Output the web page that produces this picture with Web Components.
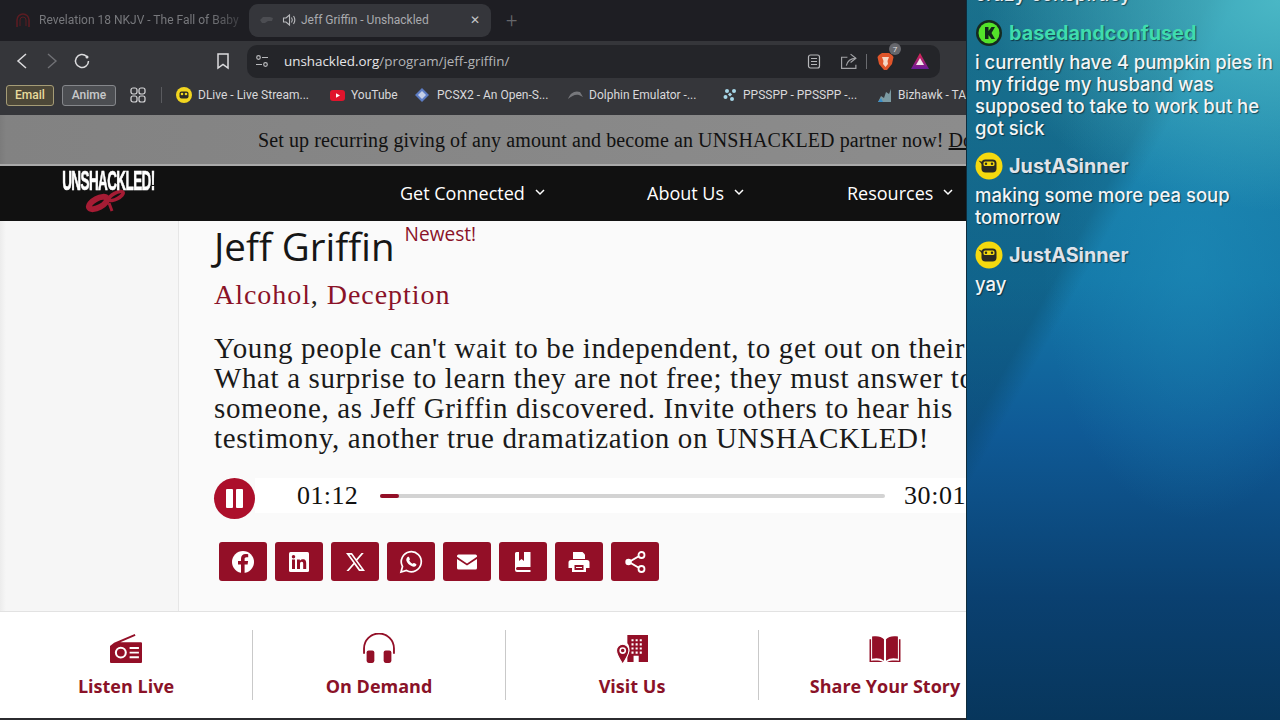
<!DOCTYPE html>
<html>
<head>
<meta charset="utf-8">
<title>Jeff Griffin - Unshackled</title>
<style>
  html, body { margin: 0; height: 720px; overflow: hidden; background: #1e1e22; }
  body { display: flex; font-family: "Open Sans", sans-serif; }
</style>
</head>
<body>
<browser-window>
  <browser-tabs></browser-tabs>
  <browser-toolbar></browser-toolbar>
  <bookmarks-bar></bookmarks-bar>
  <promo-banner>Set up recurring giving of any amount and become an UNSHACKLED partner now! <u>Do</u></promo-banner>
  <site-nav></site-nav>
  <program-page></program-page>
  <bottom-bar></bottom-bar>
</browser-window>
<stream-chat>
  <chat-message name="basedandconfused" color="#3fdcae" badge="k">i currently have 4 pumpkin pies in my fridge my husband was supposed to take to work but he got sick</chat-message>
  <chat-message name="JustASinner" color="#dfe3ea" badge="d">making some more pea soup tomorrow</chat-message>
  <chat-message name="JustASinner" color="#dfe3ea" badge="d">yay</chat-message>
</stream-chat>

<script>
// fill colour used all over the site
const RED = "#930f27";

class BrowserWindow extends HTMLElement {
  connectedCallback() {
    const shadowRoot = this.attachShadow({ mode: "open" });
    shadowRoot.innerHTML = `
    <style>
      :host { display: flex; flex-direction: column; width: 966px; height: 720px; overflow: hidden; flex: none; }
    </style>
    <slot></slot>`;
  }
}
customElements.define("browser-window", BrowserWindow);

class BrowserTabs extends HTMLElement {
  connectedCallback() {
    const shadowRoot = this.attachShadow({ mode: "open" });
    shadowRoot.innerHTML = `
    <style>
      :host { display: flex; align-items: flex-start; height: 41px; flex: none; background: #1e1e23; font: 12px Roboto, sans-serif; padding: 4px 0 0 11px; box-sizing: border-box; }
      .tab { display: flex; align-items: center; height: 33px; box-sizing: border-box; padding-bottom: 1px; }
      .inactive { width: 231px; color: #77787c; white-space: nowrap; }
      .inactive svg { margin: 0 8px 0 4px; flex: none; }
      .inactive span { -webkit-mask-image: linear-gradient(90deg, #000 85%, rgba(0,0,0,.35) 100%); }
      .active { width: 242px; margin-left: 7px; background: #35363b; border-radius: 9px; color: #a9aaae; padding-left: 11px; }
      .active .t { margin-left: 4px; flex: 1; }
      .x { color: #c4c5c8; font-size: 12px; margin-right: 9px; width: 12px; }
      .plus { color: #66676b; font-size: 20px; margin: 3px 0 0 15px; font-weight: 300; line-height: 26px; }
    </style>
    <div class="tab inactive">
      <svg width="16" height="16" viewBox="0 0 16 16" fill="none" stroke="#5b1c22" stroke-width="1.6"><path d="M2 15V8a6 6 0 0 1 12 0v7"/><path d="M5 14V8a3 3 0 0 1 6 0v6" stroke-width="1"/></svg>
      <span>Revelation 18 NKJV - The Fall of Baby</span>
    </div>
    <div class="tab active">
      <svg width="16" height="8" viewBox="0 0 16 8" fill="#4c4d52"><path d="M0 4l3-3h7l3 1-1 3H8L5 7H2z"/></svg>
      <svg width="15" height="14" viewBox="0 0 15 14" style="margin-left:6px" fill="none" stroke="#b9babd" stroke-width="1.1"><path d="M1.5 5v4H4l3.5 3V2L4 5z"/><path d="M9.5 4.5c1 1.5 1 3.5 0 5M11.5 3c1.6 2.4 1.6 5.6 0 8"/></svg>
      <span class="t">Jeff Griffin - Unshackled</span>
      <span class="x">&#x2715;</span>
    </div>
    <span class="plus">+</span>`;
  }
}
customElements.define("browser-tabs", BrowserTabs);

class BrowserToolbar extends HTMLElement {
  connectedCallback() {
    const shadowRoot = this.attachShadow({ mode: "open" });
    shadowRoot.innerHTML = `
    <style>
      :host { display: flex; align-items: center; height: 40px; flex: none; background: #35363a; box-sizing: border-box; }
      .nav { display: flex; align-items: center; padding-left: 14px; width: 247px; box-sizing: border-box; }
      .omni { flex: none; width: 693px; height: 33px; background: #242529; border-radius: 10px; display: flex; align-items: center; box-sizing: border-box; padding-left: 8px; color: #d8d8da; font: 13.4px "Open Sans", sans-serif; }
      .url b { font-weight: 400; color: #e6e6e8; }
      .url { color: #b4b5b8; margin-left: 15px; flex: 1; }
      .end { display: flex; align-items: center; padding-right: 11px; }
    </style>
    <div class="nav">
      <svg width="16" height="18" viewBox="0 0 16 18" fill="none" stroke="#dcdcde" stroke-width="1.5"><path d="M12 2L4 9l8 7"/></svg>
      <svg style="margin-left:15px" width="14" height="18" viewBox="0 0 14 18" fill="none" stroke="#707175" stroke-width="1.4"><path d="M3 2l8 7-8 7"/></svg>
      <svg style="margin-left:14px" width="18" height="18" viewBox="0 0 18 18" fill="none" stroke="#dcdcde" stroke-width="1.5"><path d="M15.5 9a6.5 6.5 0 1 1-2-4.7"/><circle cx="14" cy="5" r="1.5" fill="#dcdcde" stroke="none"/></svg>
      <svg style="margin-left:125px" width="14" height="18" viewBox="0 0 14 18" fill="none" stroke="#dcdcde" stroke-width="1.5"><path d="M2 2h10v14l-5-3.5L2 16z"/></svg>
    </div>
    <div class="omni">
      <svg width="14" height="14" viewBox="0 0 14 14" fill="none" stroke="#b8b9bc" stroke-width="1.2"><circle cx="3.5" cy="3.5" r="1.8"/><path d="M7 3.500h6M1 10.500h6"/><circle cx="10.5" cy="10.5" r="1.8"/></svg>
      <span class="url"><b>unshackled.org</b>/program/jeff-griffin/</span>
      <span class="end">
        <svg style="margin-right:1px" width="14" height="15" viewBox="0 0 14 15" fill="none" stroke="#b6b7ba" stroke-width="1.2"><rect x="1.5" y="1" width="11" height="13" rx="2"/><path d="M4 4.500h6M4 7.500h6M4 10.500h6"/></svg>
        <svg style="margin-left:18px" width="18" height="17" viewBox="0 0 17 16" fill="none" stroke="#a3a4a7" stroke-width="1.1"><path d="M10 1l5 4-5 4"/><path d="M15 5c-5 0-8 2-9 7"/><path d="M7 4H1.5v10.500H15V11"/></svg>
        <span style="width:1px;height:15px;background:#6a6b6f;margin:0 10px 0 8px"></span>
        <svg width="17" height="19" viewBox="0 0 17 19"><path d="M2 3l3-2h7l3 2 1.500 2-1.500 7-5 6h-3l-5-6-1.500-7z" fill="#e0552a"/><path d="M5 5h7l-1.500 4 .5 3-2.500 3-2.500-3 .5-3z" fill="#f6d8c6"/></svg>
        <span style="position:relative;width:0"><span style="position:absolute;left:-5px;top:-18px;width:12px;height:12px;border-radius:50%;background:#66676c;color:#e4e4e6;font-size:8px;line-height:12px;text-align:center">7</span></span>
        <svg style="margin-left:17px" width="18" height="16" viewBox="0 0 18 16"><defs><linearGradient id="bat" x1="0" y1="0" x2="0" y2="1"><stop offset="0" stop-color="#e0264f"/><stop offset="1" stop-color="#6a1b9a"/></linearGradient></defs><path d="M9 0l9 16H0z" fill="url(#bat)"/><path d="M9 5l4 7H5z" fill="#f3e6ec"/></svg>
      </span>
    </div>`;
  }
}
customElements.define("browser-toolbar", BrowserToolbar);

class BookmarksBar extends HTMLElement {
  connectedCallback() {
    const shadowRoot = this.attachShadow({ mode: "open" });
    shadowRoot.innerHTML = `
    <style>
      :host { display: flex; align-items: center; height: 34px; flex: none; background: #35363a; font: 12px Roboto, sans-serif; color: #d9d9db; padding: 0 0 6px 6px; box-sizing: border-box; white-space: nowrap; overflow: hidden; }
      .chip { height: 21px; line-height: 19px; box-sizing: border-box; border-radius: 3px; text-align: center; border: 1px solid; font-weight: 500; flex: none; }
      .email { background: #4d4838; border-color: #a59c76; color: #e8dc9d; width: 48px; }
      .anime { background: #4c4e52; border-color: #85878b; color: #c8c9cb; margin-left: 8px; width: 54px; }
      .sep { width: 1px; height: 16px; background: #5a5b5f; margin: 0 14px 0 15px; flex: none; }
      .b { display: flex; align-items: center; gap: 6px; flex: none; }
    </style>
    <span class="chip email">Email</span>
    <span class="chip anime">Anime</span>
    <svg style="margin-left:14px;flex:none" width="16" height="16" viewBox="0 0 16 16" fill="none" stroke="#d9d9db" stroke-width="1.2"><rect x="1" y="1" width="6" height="6" rx="2"/><rect x="9" y="1" width="6" height="6" rx="2"/><rect x="1" y="9" width="6" height="6" rx="2"/><rect x="9" y="9" width="6" height="6" rx="2"/></svg>
    <span class="sep"></span>
    <span class="b" style="width:154px"><svg width="16" height="16" viewBox="0 0 16 16"><circle cx="8" cy="8" r="8" fill="#f1d51f"/><rect x="3.5" y="4.500" width="9" height="7" rx="2" fill="#2a2a26"/><circle cx="6" cy="7" r="1.3" fill="#f1d51f"/><circle cx="10" cy="7" r="1.3" fill="#f1d51f"/></svg>DLive - Live Stream...</span>
    <span class="b" style="width:85px"><svg width="15" height="11" viewBox="0 0 15 11"><rect width="15" height="11" rx="3" fill="#e0142c"/><path d="M6 3.200L10 5.500 6 7.800z" fill="#fff"/></svg>YouTube</span>
    <span class="b" style="width:153px"><svg width="14" height="14" viewBox="0 0 14 14" style="margin-right:2px"><path d="M7 0l7 7-7 7-7-7z" fill="#5c7cc4"/><path d="M7 3l4 4-4 4-4-4z" fill="#c4cfe8"/></svg>PCSX2 - An Open-S...</span>
    <span class="b" style="width:155px"><svg width="15" height="10" viewBox="0 0 15 10"><path d="M0 9C2 3 7 0 12 2l3 5-4-2C7 4 4 6 0 9z" fill="#77787c"/></svg>Dolphin Emulator -...</span>
    <span class="b" style="width:154px"><svg width="14" height="14" viewBox="0 0 14 14" fill="#a7d7e8"><circle cx="4" cy="3" r="2"/><circle cx="11" cy="3" r="2"/><rect x="5.5" y="5" width="3" height="3" transform="rotate(45 7 6.5)"/><circle cx="2.5" cy="9" r="2"/><circle cx="9" cy="11" r="2"/></svg>PPSSPP - PPSSPP -...</span>
    <span class="b"><svg width="15" height="15" viewBox="0 0 15 15"><path d="M1 14l3-6 3 2 2-6 3 2 2-5v13z" fill="#7c9aa2"/><path d="M1 14h5l-2-4z" fill="#3a8fc8"/></svg>Bizhawk - TA</span>`;
  }
}
customElements.define("bookmarks-bar", BookmarksBar);

class PromoBanner extends HTMLElement {
  connectedCallback() {
    const shadowRoot = this.attachShadow({ mode: "open" });
    shadowRoot.innerHTML = `
    <style>
      :host { display: block; height: 51px; flex: none; background: linear-gradient(90deg, #7b7b7b 0, #828282 6px, #8c8c8c 100%); border-bottom: 2px solid #a9a9a9; box-sizing: border-box; font: 20px/50px "Liberation Serif", serif; color: #111; padding-left: 258px; white-space: nowrap; overflow: hidden; letter-spacing: .09px; }
    </style>
    <slot></slot>`;
  }
}
customElements.define("promo-banner", PromoBanner);

class SiteNav extends HTMLElement {
  connectedCallback() {
    const shadowRoot = this.attachShadow({ mode: "open" });
    const chev = `<svg width="10" height="7" viewBox="0 0 10 7" fill="none" stroke="#fff" stroke-width="1.5"><path d="M1 1l4 4 4-4"/></svg>`;
    shadowRoot.innerHTML = `
    <style>
      :host { display: flex; align-items: center; height: 55px; flex: none; background: #111; color: #fff; font: 18px "Open Sans", sans-serif; white-space: nowrap; overflow: hidden; box-sizing: border-box; padding: 0 0 2px 64px; }
      .logo { width: 88px; height: 53px; display: flex; flex-direction: column; align-items: center; flex: none; margin-right: 248px; }
      .word { font: 700 27px/24px "Liberation Sans", sans-serif; letter-spacing: -1.2px; margin-top: 3px; transform: scaleX(.5); transform-origin: center top; -webkit-text-stroke: .7px #fff; }
      .item { display: flex; align-items: center; gap: 10px; flex: none; }
    </style>
    <div class="logo">
      <span class="word">UNSHACKLED!</span>
      <svg width="42" height="24" viewBox="0 0 42 24" style="margin-top:-4px;margin-left:-4px" fill="none" stroke="#a51c34">
        <ellipse cx="13" cy="14" rx="10" ry="4.5" transform="rotate(-28 13 14)" stroke-width="6"/>
        <ellipse cx="31" cy="7" rx="8" ry="3" transform="rotate(-28 31 7)" stroke-width="3.5"/>
        <path d="M24 14l3 8" stroke-width="3"/>
      </svg>
    </div>
    <span class="item" style="width:247px">Get Connected ${chev}</span>
    <span class="item" style="width:200px">About Us ${chev}</span>
    <span class="item">Resources ${chev}</span>`;
  }
}
customElements.define("site-nav", SiteNav);

class AudioPlayer extends HTMLElement {
  connectedCallback() {
    const shadowRoot = this.attachShadow({ mode: "open" });
    shadowRoot.innerHTML = `
    <style>
      :host { display: flex; align-items: flex-start; height: 41px; font: 26px "Liberation Serif", serif; color: #111; white-space: nowrap; letter-spacing: .4px; }
      .play { width: 41px; height: 41px; border-radius: 50%; background: #ac0f2b; display: flex; align-items: center; justify-content: center; gap: 3px; flex: none; }
      .play i { width: 7px; height: 19px; background: #fff; border-radius: 1px; }
      .strip { display: flex; align-items: center; background: #fff; height: 35px; flex: none; width: 752px; }
      .now { width: 125px; padding-left: 42px; box-sizing: border-box; flex: none; }
      .track { width: 505px; height: 4px; background: #d3d3d3; border-radius: 2px; flex: none; margin-top: 1px; }
      .track i { display: block; width: 19px; height: 4px; background: ${RED}; border-radius: 2px; }
      .total { margin-left: 19px; letter-spacing: .6px; }
    </style>
    <div class="play"><i></i><i></i></div>
    <div class="strip">
      <span class="now">01:12</span>
      <div class="track"><i></i></div>
      <span class="total">30:01</span>
    </div>`;
  }
}
customElements.define("audio-player", AudioPlayer);

class ShareBar extends HTMLElement {
  connectedCallback() {
    const shadowRoot = this.attachShadow({ mode: "open" });
    const icons = [
      // facebook
      `<circle cx="12" cy="12" r="11" fill="#fff"/><path d="M13.6 23v-8.500h3l.5-3.500h-3.500V9c0-1 .5-1.800 2-1.800h1.600v-3c-.8-.1-1.700-.2-2.600-.2-2.800 0-4.600 1.700-4.600 4.700V11H7v3.500h3V23z" fill="${RED}"/>`,
      // linkedin
      `<rect x="2" y="2" width="20" height="20" rx="1.5" fill="#fff"/><path d="M5 9.500h3V19H5zM6.500 5a1.700 1.700 0 1 1 0 3.500 1.700 1.700 0 0 1 0-3.500zM10 9.500h2.900v1.300c.5-.8 1.500-1.500 2.900-1.500 3 0 3.400 2 3.400 4.500V19h-3v-4.800c0-1.100 0-2.400-1.500-2.400s-1.700 1.100-1.700 2.400V19h-3z" fill="${RED}"/>`,
      // x
      `<path d="M3 3h6l4.300 6L18.500 3h2.300l-6.500 7.500L22 21h-6l-4.700-6.500L5.700 21H3.400l7-8.100zm3.400 1.700L17 19.300h1.800L8.200 4.700z" fill="#fff"/>`,
      // whatsapp
      `<path d="M2 22l1.500-5.500A10 10 0 1 1 7.500 20.500z" fill="none" stroke="#fff" stroke-width="1.7"/><path d="M8.500 7c.5-.5 1.300-.5 1.500 0l.9 2c.1.4 0 .7-.7 1.500.8 1.500 2 2.600 3.500 3.300.7-.8 1-1 1.400-.8l2 1c.4.300.4 1-.1 1.700-.9 1.100-2.500 1.300-4.500.4-2.400-1-4.200-2.800-5-5-.5-1.600-.1-2.900 1-4.100z" fill="#fff"/>`,
      // mail
      `<path d="M3.500 4.500h17A1.500 1.500 0 0 1 22 6v.8l-10 6.700L2 6.800V6a1.500 1.500 0 0 1 1.500-1.500z" fill="#fff"/><path d="M2 9l10 6.600L22 9v9a1.500 1.500 0 0 1-1.500 1.500h-17A1.500 1.500 0 0 1 2 18z" fill="#fff"/>`,
      // bookmark book
      `<path d="M4 3.500A1.500 1.500 0 0 1 5.500 2H8v9l2.500-2 2.500 2V2h6.500v15H6.500a1 1 0 0 0 0 3h13v2H6a2 2 0 0 1-2-2z" fill="#fff"/>`,
      // print
      `<path d="M6 2h9.500L18 4.500V9H6z" fill="#fff"/><path d="M4 10h16a2.500 2.500 0 0 1 2.500 2.500V18H19v4H5v-4H1.500v-5.500A2.500 2.500 0 0 1 4 10z" fill="#fff"/><path d="M7.500 15h9v5h-9z" fill="${RED}"/><path d="M9 17h6v1H9z" fill="#fff"/>`,
      // share
      `<path d="M18 5L6 12l12 7" fill="none" stroke="#fff" stroke-width="2"/><circle cx="18.5" cy="5" r="3" fill="${RED}" stroke="#fff" stroke-width="1.8"/><circle cx="5.500" cy="12" r="3.200" fill="#fff"/><circle cx="18.5" cy="19" r="3" fill="${RED}" stroke="#fff" stroke-width="1.8"/>`,
    ];
    shadowRoot.innerHTML = `
    <style>
      :host { display: flex; gap: 8px; margin-left: 5px; }
      .btn { width: 48px; height: 39px; background: ${RED}; border-radius: 3px; display: flex; align-items: center; justify-content: center; }
    </style>
    ${icons.map((d) => `<div class="btn"><svg width="24" height="24" viewBox="0 0 24 24">${d}</svg></div>`).join("")}`;
  }
}
customElements.define("share-bar", ShareBar);

class ProgramPage extends HTMLElement {
  connectedCallback() {
    const shadowRoot = this.attachShadow({ mode: "open" });
    shadowRoot.innerHTML = `
    <style>
      :host { display: flex; height: 390px; flex: none; background: #f4f4f4; overflow: hidden; }
      .side { width: 178px; flex: none; background: linear-gradient(90deg, #ececec 0, #f6f6f6 6px); border-right: 1px solid #e6e6e6; }
      main { flex: none; width: 788px; box-sizing: border-box; background: #fafafa; padding-left: 35px; white-space: nowrap; overflow: hidden; }
      .title { display: flex; align-items: flex-start; height: 46px; margin-top: 2px; }
      h1 { font: 400 38.5px/46px "Open Sans", sans-serif; margin: 0; color: #161616; }
      .new { font: 19.1px/26px "Open Sans", sans-serif; color: #8a1228; margin: -2px 0 0 10px; }
      .tags { font: 28px/36px "Liberation Serif", serif; color: #8a1228; margin-top: 8px; letter-spacing: .95px; }
      .tags span { color: #222; }
      p { margin: 20px 0 0; font: 29px/30px "Liberation Serif", serif; color: #1a1a1a; letter-spacing: .62px; }
      audio-player { margin-top: 25px; }
      share-bar { margin-top: 23px; }
    </style>
    <div class="side"></div>
    <main>
      <div class="title"><h1>Jeff Griffin</h1><span class="new">Newest!</span></div>
      <div class="tags">Alcohol<span>,</span> Deception</div>
      <p>Young people can't wait to be independent, to get out on their<br>What a surprise to learn they are not free; they must answer to<br>someone, as Jeff Griffin discovered. Invite others to hear his<br>testimony, another true dramatization on UNSHACKLED!</p>
      <audio-player></audio-player>
      <share-bar></share-bar>
    </main>`;
  }
}
customElements.define("program-page", ProgramPage);

class BottomBar extends HTMLElement {
  connectedCallback() {
    const shadowRoot = this.attachShadow({ mode: "open" });
    const items = [
      ["Listen Live", `<path d="M4 9.500L24 1l.7 1.600L10 9h20a1 1 0 0 1 1 1v18a1 1 0 0 1-1 1H1a1 1 0 0 1-1-1V12.500z" fill="${RED}"/><circle cx="10.5" cy="19" r="4.8" fill="none" stroke="#fff" stroke-width="2"/><path d="M19 14.500h9M19 19h9M19 23.500h9" stroke="#fff" stroke-width="1.8"/>`],
      ["On Demand", `<path d="M1 20v-5a14.500 14.500 0 0 1 29 0v5" fill="none" stroke="${RED}" stroke-width="1.8"/><rect x="3.500" y="17" width="7.500" height="12" rx="2" fill="${RED}"/><rect x="20" y="17" width="7.500" height="12" rx="2" fill="${RED}"/>`],
      ["Visit Us", `<path d="M11 2h20v26h-9v-6h-5v6h-6v-6c1-2 2-3 2-6 0-3-1-5-2-6z" fill="${RED}"/><path d="M15 6h2v2h-2zM19 6h2v2h-2zM23 6h2v2h-2zM15 10h2v2h-2zM19 10h2v2h-2zM23 10h2v2h-2zM15 14h2v2h-2zM19 14h2v2h-2zM23 14h2v2h-2zM15 18h2v2h-2zM19 18h2v2h-2zM23 18h2v2h-2z" fill="#fff"/><path d="M6.500 11a6 6 0 0 1 6 6c0 4-6 13-6 13S.5 21 .5 17a6 6 0 0 1 6-6z" fill="${RED}" stroke="#fff" stroke-width="1"/><circle cx="6.500" cy="17" r="2.500" fill="none" stroke="#fff" stroke-width="1.500"/>`],
      ["Share Your Story", `<path d="M14.500 6C12 3.500 8 2.500 3 3.500V25c4.500-1 8.500-.5 11.500 2zM16.500 6c2.500-2.500 6.500-3.500 11.500-2.500V25c-4.500-1-8.500-.5-11.500 2z" fill="${RED}"/><path d="M.5 6v22h13c-3-1.500-7-1.500-11.500-1V6zM30.500 6v22h-13c3-1.500 7-1.500 11.500-1V6z" fill="${RED}"/>`],
    ];
    shadowRoot.innerHTML = `
    <style>
      :host { display: block; height: 109px; flex: none; background: #fff; border-top: 1px solid #e2e2e2; border-bottom: 2px solid #2b2b2f; box-sizing: border-box; overflow: hidden; }
      .row { display: grid; grid-template-columns: 252px 253px 253px 253px; height: 70px; margin-top: 18px; }
      .cell { display: flex; flex-direction: column; align-items: center; border-left: 1px solid #c9c9c9; }
      .cell:first-child { border-left: 0; }
      svg { margin-top: 3px; }
      span { font: 700 18px/24px "Open Sans", sans-serif; color: #8a1228; margin-top: 9px; white-space: nowrap; }
    </style>
    <div class="row">
      ${items.map(([t, d]) => `<div class="cell"><svg width="32" height="32" viewBox="0 0 31 31">${d}</svg><span>${t}</span></div>`).join("")}
    </div>`;
  }
}
customElements.define("bottom-bar", BottomBar);

class StreamChat extends HTMLElement {
  connectedCallback() {
    const shadowRoot = this.attachShadow({ mode: "open" });
    shadowRoot.innerHTML = `
    <style>
      :host { display: flex; flex-direction: column; gap: 13px; width: 314px; height: 720px; flex: none; box-sizing: border-box; padding: 0 6px 0 8px; overflow: hidden; border-left: 1px solid #0e2c3c;
        background:
          radial-gradient(ellipse 300px 210px at 100% 0, #4ab7c5 0, rgba(74,183,197,0) 100%),
          radial-gradient(ellipse 150px 260px at 72% 36%, rgba(30,140,185,.55) 0, rgba(30,140,185,0) 100%),
          linear-gradient(119deg, rgba(8,55,75,.3) 0, rgba(8,55,75,.3) 34%, rgba(8,55,75,0) 38%),
          linear-gradient(180deg, #2189a8 0, #1478a8 39%, #0f5a96 60%, #0a4070 83%, #07365c 100%); }
      .cut { display: block; margin-top: -16px; font: 500 19px/22px Inter, sans-serif; color: #e8eef2; text-shadow: 1px 1px 1px rgba(0,0,0,.45); }
    </style>
    <span class="cut">crazy conspiracy</span>
    <slot></slot>`;
  }
}
customElements.define("stream-chat", StreamChat);

class ChatMessage extends HTMLElement {
  connectedCallback() {
    const shadowRoot = this.attachShadow({ mode: "open" });
    const badge = this.getAttribute("badge") === "k"
      ? `<svg width="28" height="28" viewBox="0 0 28 28"><circle cx="14" cy="14" r="13" fill="#152a20"/><circle cx="14" cy="14" r="10.5" fill="#53e32a"/><path d="M10 8h3.500v4l3-4H20l-3.500 6 3.500 6h-3.500l-3-4v4H10z" fill="#11281a"/></svg>`
      : `<svg width="28" height="28" viewBox="0 0 28 28"><circle cx="14" cy="14" r="13.5" fill="#f5d90f"/><path d="M3.500 8.500l4 1.500v3z" fill="#2a2a22"/><rect x="6.500" y="7.500" width="15" height="13" rx="4" fill="#2b2a22"/><rect x="8.500" y="9.500" width="11" height="4.500" rx="1.500" fill="#f5d90f"/><circle cx="11" cy="11.700" r="1.200" fill="#2b2a22"/><circle cx="17" cy="11.700" r="1.200" fill="#2b2a22"/></svg>`;
    shadowRoot.innerHTML = `
    <style>
      :host { display: block; font: 500 18.5px/22px Inter, sans-serif; color: #f2f5f7; text-shadow: 1px 1px 1px rgba(0,0,0,.5); }
      .who { display: flex; align-items: center; gap: 6px; height: 28px; margin-bottom: 4px; }
      .name { font-weight: 700; font-size: 19.8px; }
      .text { display: block; margin-right: -2px; }
    </style>
    <div class="who">${badge}<span class="name" style="color:${this.getAttribute("color")}">${this.getAttribute("name")}</span></div>
    <span class="text"><slot></slot></span>`;
  }
}
customElements.define("chat-message", ChatMessage);
</script>
</body>
</html>
